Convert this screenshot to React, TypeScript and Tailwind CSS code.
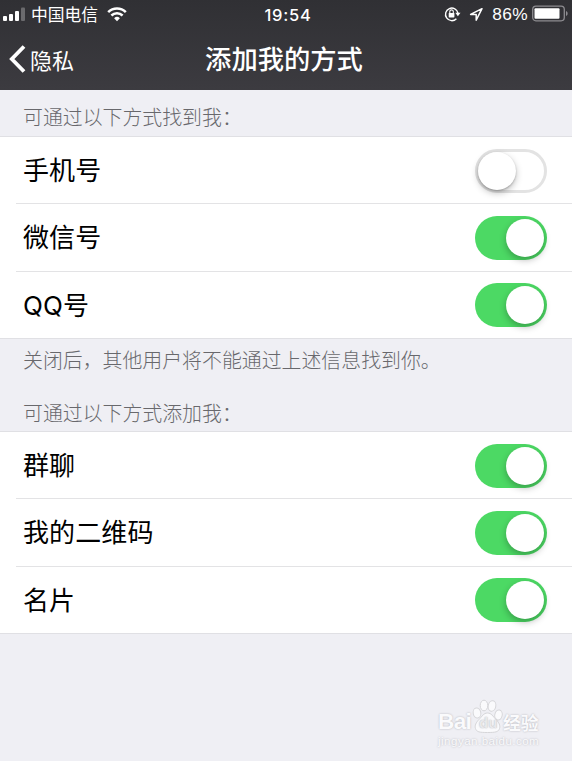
import { useState } from "react";

type Item = { label: string; on: boolean };

const FIND_ITEMS: Item[] = [
  { label: "手机号", on: false },
  { label: "微信号", on: true },
  { label: "QQ号", on: true },
];

const ADD_ITEMS: Item[] = [
  { label: "群聊", on: true },
  { label: "我的二维码", on: true },
  { label: "名片", on: true },
];

function Toggle({ label, initial }: { label: string; initial: boolean }) {
  const [on, setOn] = useState(initial);

  return (
    <button
      role="switch"
      aria-checked={on}
      aria-label={label}
      onClick={() => setOn(!on)}
      className={`flex h-[44px] w-[72px] shrink-0 cursor-pointer items-center rounded-full ${
        on ? "justify-end bg-[#4cd964] pr-[3px]" : "justify-start border-[3px] border-[#e3e3e3] bg-white"
      }`}
    >
      <span
        className={`size-[38px] rounded-full bg-white ${
          on
            ? "shadow-[0_3px_7px_rgba(0,0,0,0.28)]"
            : "shadow-[0_3px_7px_rgba(0,0,0,0.25),0_1px_2px_rgba(0,0,0,0.22)]"
        }`}
      />
    </button>
  );
}

function Group({ items }: { items: Item[] }) {
  return (
    <ul className="border-y border-[#e0e0e4] bg-white pl-4">
      {items.map((item, i) => (
        <li
          key={item.label}
          className={`flex items-center justify-between pl-[7px] pr-[25px] pt-px ${
            i > 0 ? "h-[67.5px] border-t border-[#e3e3e5]" : "h-[66px]"
          }`}
        >
          <span className="pt-px font-[Inter,'Noto_Sans_CJK_SC',sans-serif] text-[26px] leading-none tracking-[0.1px] text-black">
            {item.label}
          </span>
          <Toggle label={item.label} initial={item.on} />
        </li>
      ))}
    </ul>
  );
}

function StatusBar() {
  return (
    <div className="flex h-[29px] items-center justify-between pl-[3px] pr-[4px]">
      {/* signal + carrier */}
      <div className="flex w-[230px] items-center">
        <svg width="23" height="15" viewBox="0 0 23 15" fill="#fff">
          <rect x="0" y="9" width="4" height="5" rx="1" />
          <rect x="6" y="7" width="4" height="7" rx="1" />
          <rect x="12" y="4" width="4" height="10" rx="1" />
          <rect x="18" y="0.5" width="4" height="13.5" rx="1" opacity="0.28" />
        </svg>
        <span className="ml-[5px] text-[16.8px] leading-none">中国电信</span>
        <svg className="ml-[9px]" width="20" height="15" viewBox="0 0 20 15" fill="none" stroke="#fff">
          <path d="M1.2 5.1a12.6 12.6 0 0 1 17.6 0" strokeWidth="2.6" />
          <path d="M4.4 8.5a8 8 0 0 1 11.2 0" strokeWidth="2.5" />
          <path d="M7.1 11.2a4.2 4.2 0 0 1 5.8 0L10 14.2z" fill="#fff" stroke="none" />
        </svg>
      </div>

      <span className="ml-[5px] pt-px font-[Inter,sans-serif] text-[16.5px] font-medium leading-none tracking-[0.75px]">
        19:54
      </span>

      {/* lock, location, battery */}
      <div className="flex w-[230px] items-center justify-end">
        <svg width="17" height="16" viewBox="0 0 17 16" fill="none" stroke="#fff">
          <path d="M12.4 12.7A6.3 6.3 0 1 1 14 7.2" strokeWidth="1.4" />
          <path d="M11.3 6.8h5.2l-2.6 3.5z" fill="#fff" stroke="none" />
          <rect x="4.7" y="6.9" width="5.7" height="4.5" rx="0.6" fill="#fff" stroke="none" />
          <path d="M5.8 7V5.6a1.75 1.75 0 0 1 3.5 0V7" strokeWidth="1.1" />
        </svg>
        <svg className="ml-2" width="15" height="15" viewBox="0 0 15 15" fill="none">
          <path d="M13 1.7 1.6 7.4h5.6v5.8z" stroke="#fff" strokeWidth="1.5" strokeLinejoin="round" />
        </svg>
        <span className="ml-[8px] pt-px font-['Liberation_Sans',sans-serif] text-[17.3px] leading-none tracking-[0.4px]">
          86%
        </span>
        <svg className="ml-[4px]" width="36" height="18" viewBox="0 0 36 18">
          <rect x="0.7" y="1.2" width="31.6" height="14.6" rx="3.2" fill="none" stroke="#8d8c90" strokeWidth="1.3" />
          <rect x="2.5" y="3.3" width="25" height="10.4" rx="1" fill="#fff" />
          <path d="M34 6c2.2.8 2.2 4.2 0 5z" fill="#8d8c90" />
        </svg>
      </div>
    </div>
  );
}

function Watermark() {
  return (
    <div className="absolute left-[438px] top-[698px] w-[104px] text-[#fafafc] [text-shadow:0_0_2px_#b0b0b6]">
      <div className="flex h-[36px] items-end">
        <span className="w-[34px] font-['Liberation_Sans',sans-serif] text-[22.5px] font-bold leading-[24px] tracking-[-0.6px]">
          Bai
        </span>
        <div className="relative h-[35px] w-[31px] shrink-0">
          <svg width="31" height="35" viewBox="0 0 31 35" fill="#fafafc" stroke="#d6d6d9" strokeWidth="1">
            <ellipse cx="5" cy="14" rx="3.8" ry="5" transform="rotate(-12 5 14)" />
            <ellipse cx="12" cy="6.5" rx="3.8" ry="5.3" />
            <ellipse cx="20" cy="7" rx="3.8" ry="5.3" transform="rotate(12 20 7)" />
            <ellipse cx="26.5" cy="16" rx="3.7" ry="5" transform="rotate(12 26.5 16)" />
            <path d="M15.5 14c4 0 5.5 3.5 8.5 6.5 3 3 4.5 6 3.500 9-1 3.500-4 4-12 4s-11-.5-12-4c-1-3 .5-6 3.500-9 3-3 4.500-6.500 8.500-6.500z" />
          </svg>
          <span className="absolute left-[7px] top-[16px] font-['Liberation_Sans',sans-serif] text-[15px] font-bold leading-none text-[#e9e9ec] [text-shadow:0_0_1.5px_#a8a8ae]">
            du
          </span>
        </div>
        <span className="whitespace-nowrap text-[17.8px] font-bold leading-[23px]">经验</span>
      </div>
      <div className="font-['Liberation_Sans',sans-serif] text-[11.5px] leading-[14px] tracking-[0.5px]">
        jingyan.baidu.com
      </div>
    </div>
  );
}

export default function App() {
  return (
    <div
      lang="zh-CN"
      className="relative h-[761px] w-[572px] overflow-hidden bg-[#efeff4] font-['Noto_Sans_CJK_SC',sans-serif]"
    >
      {/* HEADER */}
      <header className="h-[90px] bg-linear-to-b from-[#303034] to-[#3c3b40] text-white">
        <StatusBar />
        <div className="flex h-[61px] items-center pb-px pl-[9px] pr-[9px]">
          <button className="flex w-[180px] cursor-pointer items-center">
            <svg width="17" height="28" viewBox="0 0 17 28" fill="none" stroke="#fff" strokeWidth="3.8">
              <path d="M15 1.5 2.8 14 15 26.5" />
            </svg>
            <span className="ml-[4px] pb-px text-[22px] font-normal leading-none">隐私</span>
          </button>
          <h1 className="mr-[4px] flex-1 whitespace-nowrap pb-px text-center text-[26.3px] font-medium leading-none">
            添加我的方式
          </h1>
          <div className="w-[180px]" />
        </div>
      </header>

      {/* CONTENT */}
      <main>
        <h2 className="flex h-[46px] items-center pl-[23px] pt-[8px] text-[19.9px] font-light leading-none text-[#68686c]">
          可通过以下方式找到我：
        </h2>
        <Group items={FIND_ITEMS} />
        <p className="flex h-[42px] items-center pb-px pl-[23px] text-[19.9px] font-light leading-none text-[#68686c]">
          关闭后，其他用户将不能通过上述信息找到你。
        </p>
        <h2 className="mt-[9px] flex h-[41px] items-center pl-[23px] pt-[4px] text-[19.9px] font-light leading-none text-[#68686c]">
          可通过以下方式添加我：
        </h2>
        <Group items={ADD_ITEMS} />
      </main>

      <Watermark />
    </div>
  );
}
